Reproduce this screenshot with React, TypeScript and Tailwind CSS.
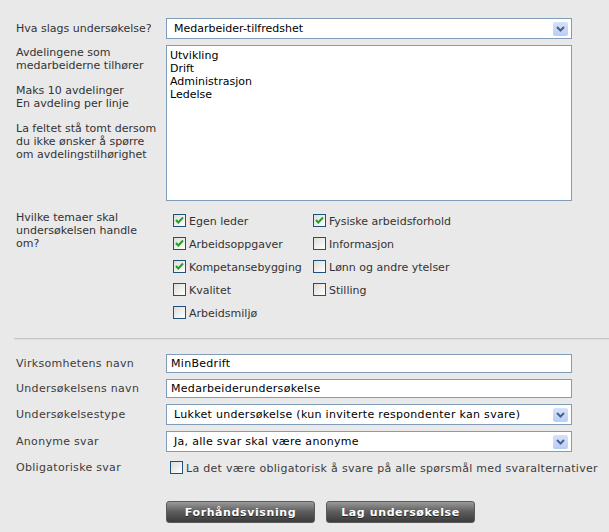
import React from "react";

const themes: [string, boolean][][] = [
  [
    ["Egen leder", true],
    ["Arbeidsoppgaver", true],
    ["Kompetansebygging", true],
    ["Kvalitet", false],
    ["Arbeidsmiljø", false],
  ],
  [
    ["Fysiske arbeidsforhold", true],
    ["Informasjon", false],
    ["Lønn og andre ytelser", false],
    ["Stilling", false],
  ],
];

function Box({ checked }: { checked: boolean }) {
  return (
    <span className="relative inline-block h-[13px] w-[13px] shrink-0 border border-[#1c5180] bg-gradient-to-br from-[#dcdcd7] to-white">
      {checked && (
        <svg viewBox="0 0 11 11" className="absolute left-0 top-0 h-[11px] w-[11px]">
          <path d="M2 5 L4.3 7.5 L9 2.5" fill="none" stroke="#21a121" strokeWidth="2" />
        </svg>
      )}
    </span>
  );
}

function Arrow() {
  return (
    <span className="flex h-[14px] w-[15px] items-center justify-center rounded-[2px] bg-gradient-to-b from-[#d6e2fc] to-[#b8cdf7]">
      <svg viewBox="0 0 9 6" className="h-[6px] w-[9px]">
        <path d="M1 1 L4.5 4.5 L8 1" fill="none" stroke="#4d6185" strokeWidth="2" />
      </svg>
    </span>
  );
}

function Select({ value }: { value: string }) {
  return (
    <div className="flex h-[21px] flex-1 items-center justify-between border border-[#7f9db9] bg-white pl-[7px] pr-[3px] text-black">
      <span>{value}</span>
      <Arrow />
    </div>
  );
}

function Field({ value }: { value: string }) {
  return (
    <div className="flex h-[19px] flex-1 items-center border border-[#7f9db9] bg-white pl-[4px] text-black">
      {value}
    </div>
  );
}

function Button({ label }: { label: string }) {
  return (
    <button className="h-[22px] w-[149px] rounded-[3px] border border-[#5a5a5a] bg-gradient-to-b from-[#9a9a9a] via-[#5c5c5c] to-[#3c3c3c] text-[11px] font-bold tracking-[0.6px] text-white [text-shadow:0_1px_0_#222]">
      {label}
    </button>
  );
}

export default function App() {
  return (
    <div className="min-h-screen bg-[#e9e9e9] font-['DejaVu_Sans','Liberation_Sans',sans-serif] text-[11px] leading-[13px] text-[#333]">
      <div className="pl-4 pr-[37px] pt-[18px]">
        <div className="flex">
          <div className="w-[150px] shrink-0 pt-[4px]">Hva slags undersøkelse?</div>
          <Select value="Medarbeider-tilfredshet" />
        </div>

        <div className="mt-[6px] flex">
          <div className="w-[150px] shrink-0 pt-[1px]">
            <p>Avdelingene som medarbeiderne tilhører</p>
            <p className="mt-[12px]">
              Maks 10 avdelinger
              <br />
              En avdeling per linje
            </p>
            <p className="mt-[12px] pr-2">La feltet stå tomt dersom du ikke ønsker å spørre om avdelingstilhørighet</p>
          </div>
          <div className="h-[156px] flex-1 border border-[#7f9db9] bg-white px-[3px] pt-[3px] text-black">
            Utvikling
            <br />
            Drift
            <br />
            Administrasjon
            <br />
            Ledelse
          </div>
        </div>

        <div className="mt-[9px] flex">
          <div className="w-[150px] shrink-0 pt-[1px] pr-4">Hvilke temaer skal undersøkelsen handle om?</div>
          <div className="flex pl-[7px] pt-[3px]">
            {themes.map((col, i) => (
              <div key={i} className="flex w-[140px] flex-col gap-[8px]">
                {col.map(([name, on]) => (
                  <label key={name} className="flex items-center gap-[3px]">
                    <Box checked={on} />
                    <span className="pt-[2px]">{name}</span>
                  </label>
                ))}
              </div>
            ))}
          </div>
        </div>
      </div>

      <div className="ml-[14px] mt-[18px] h-[2px] border-t border-[#c6c6c6] bg-[#dedede]" />

      <div className="pl-4 pr-[37px] pt-[14px] text-[#3c3c3c]">
        <div className="flex flex-col gap-[6px] tracking-[0.3px]">
          <div className="flex items-center">
            <div className="w-[150px] shrink-0">Virksomhetens navn</div>
            <Field value="MinBedrift" />
          </div>
          <div className="flex items-center">
            <div className="w-[150px] shrink-0">Undersøkelsens navn</div>
            <Field value="Medarbeiderundersøkelse" />
          </div>
          <div className="flex items-center">
            <div className="w-[150px] shrink-0">Undersøkelsestype</div>
            <Select value="Lukket undersøkelse (kun inviterte respondenter kan svare)" />
          </div>
          <div className="flex items-center">
            <div className="w-[150px] shrink-0">Anonyme svar</div>
            <Select value="Ja, alle svar skal være anonyme" />
          </div>
          <div className="mt-[2px] flex items-center">
            <div className="w-[154px] shrink-0">Obligatoriske svar</div>
            <label className="flex items-center gap-[3px] whitespace-nowrap">
              <Box checked={false} />
              <span className="pt-[2px]">La det være obligatorisk å svare på alle spørsmål med svaralternativer</span>
            </label>
          </div>
        </div>

        <div className="mt-[26px] flex gap-[11px] pl-[150px]">
          <Button label="Forhåndsvisning" />
          <Button label="Lag undersøkelse" />
        </div>
      </div>
    </div>
  );
}
